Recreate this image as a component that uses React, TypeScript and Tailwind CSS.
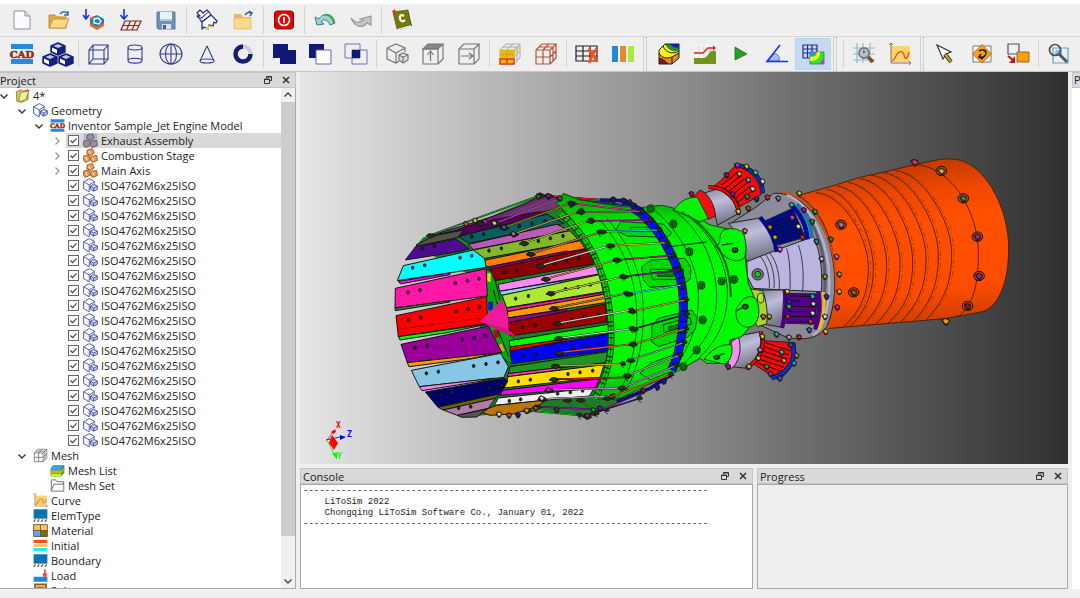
import { useState, type ReactNode } from "react";

type Shape = [points: string, fill: string];
type Dot = [x: number, y: number, fill: string];
type Wire = [x1: number, y1: number, x2: number, y2: number, stroke: string];

const Icon = ({ children, small }: { children: ReactNode; small?: boolean }) => (
  <svg
    viewBox="0 0 24 24"
    fill="none"
    className={small ? "size-[15px] shrink-0" : "size-6 shrink-0 overflow-visible"}
    aria-hidden="true"
  >
    {children}
  </svg>
);

/* ---------- icon drawings, all on a 24 x 24 grid ---------- */

const newFile = (
  <>
    <path d="M4 3h11l5 5v13H4z" fill="#fafcff" stroke="#8c949c" />
    <path d="M15 3v5h5" fill="#d5dbe2" stroke="#8c949c" />
  </>
);
const folderOpen = (
  <>
    <path d="M3 7h6l2 2h9v11H3z" fill="#e5a83c" stroke="#c08a35" />
    <path d="M3 20l4-9h16l-4 9z" fill="#fcd680" stroke="#c9953f" />
    <path d="M14 6c2-3 6-3 8 0M22 3v4h-4" stroke="#3f679c" strokeWidth="1.4" />
  </>
);
const importCad = (
  <>
    <path d="M4 1v9M1 7l3 4 3-4" stroke="#1230ff" strokeWidth="1.6" />
    <path d="M8 10l7-3 7 4v6l-7 4-7-4z" fill="#287eb2" />
    <path d="M8 15l7 4 7-4v3l-7 4-7-4z" fill="#f26522" />
    <path d="M12 11l4-1 3 3-2 3-5-1z" stroke="#fff" strokeWidth="1.3" />
    <path d="M8 11l4-2" stroke="#f26522" strokeWidth="2" />
  </>
);
const importMesh = (
  <>
    <path d="M6 1v9M2.500 7L6 11l3.500-4" stroke="#1230ff" strokeWidth="1.6" />
    <path
      d="M7 13h16l-4 9H3zM5 17.500h16M12.500 13l-4 9M18 13l-4 9"
      stroke="#7c2c20"
      strokeWidth="1.2"
      fill="#f5e9e2"
    />
  </>
);
const save = (
  <>
    <path d="M3 4h18v17H4l-1-1z" fill="#7190b5" stroke="#5e7898" />
    <path d="M6 4h12v9H6z" fill="#e9f2fb" />
    <path d="M6 11h12v2H6z" fill="#b4c8dc" />
    <path d="M8 16h9v5H8z" fill="#d8e0e8" />
    <path d="M9 17h3v4H9z" fill="#445e7c" />
  </>
);
/* wide brush head with its handle pointing up and left */
const brush = (
  <g stroke="#28308c" strokeWidth="1.3" strokeLinejoin="round">
    <path d="M2 8l3 3 9-7-2-2-4 3-3-3-3 3 3 3z" fill="#fff" />
    <path d="M5 12l2 2 9-7-2-3" fill="#fff" />
    <path d="M7 14l9-7 6 6-1 2-2-1-1 4-4-1-1 4-4-2-2 2z" fill="#fff" />
    <path d="M10 20l3 1 1-3 4 1" stroke="#e8d13a" />
  </g>
);
const folder = (
  <>
    <path d="M3 6h7l2 3h8v11H3z" fill="#e8b964" />
    <path d="M3 10h17v11H3z" fill="#fbd98c" stroke="#dcb062" strokeWidth=".7" />
    <path d="M14 7c2-3 5-3 6-2M18 3l3 2-2 3" stroke="#3d5c8d" strokeWidth="1.5" />
  </>
);
const power = (
  <>
    <rect x="2.500" y="3" width="19" height="18" rx="3" fill="#e60505" stroke="#801010" />
    <circle cx="12" cy="12" r="5.500" stroke="#fff" strokeWidth="1.6" />
    <path d="M12 9v6" stroke="#fff" strokeWidth="1.8" />
  </>
);
const undo = (
  <>
    <path
      d="M2 9l2 8 7-1-3-2c3-4 7-2 9 3l5-2c-2-8-11-12-16-4z"
      fill="#9fd2dc"
      stroke="#3b7f7d"
    />
    <path d="M9 8c5-2 10 2 11 7l2-1C21 7 13 3 9 8z" fill="#35b04c" />
  </>
);
const redo = (
  <path
    d="M22 8v9l-4-2c-5 6-12 4-16-5 3 4 8 6 12 2l-3-1z"
    fill="#c6c6c6"
    stroke="#999"
    strokeWidth="1.2"
  />
);
const manual = (
  <>
    <path d="M5 6l13-3 4 15-12 4z" fill="#2c5578" />
    <path d="M3 4l15-2 3 15-14 4z" fill="#757a08" stroke="#4c4f0a" strokeWidth=".7" />
    <path d="M2 3l3-2 1 4-2 1z" fill="#d43b22" />
    <path d="M7 21l14-4v2L9 22z" fill="#eee" />
    <path d="M14 8c-3-2-5 0-4 3s3 3 5 1" stroke="#fff" strokeWidth="2.2" />
  </>
);
const cad = (
  <>
    <path d="M1 2h22v5H1zM1 17h22v5H1z" fill="#238be0" />
    <text
      x="12"
      y="15.500"
      textAnchor="middle"
      fontSize="10"
      fontWeight="700"
      fontFamily="'DejaVu Serif', serif"
      fill="#962c12"
      stroke="#962c12"
      strokeWidth=".6"
    >
      CAD
    </text>
  </>
);
const cubes = (
  <g strokeLinejoin="round">
    {[
      [12, 0],
      [4, 11],
      [20, 11],
    ].map(([x, y]) => (
      <g key={x} transform={`translate(${x} ${y})`}>
        <path d="M0 1l7 3v6l-7 3-7-3V4z" fill="#17217c" stroke="#17217c" strokeWidth="1.400" />
        <path d="M0 2l4.500 2L0 6l-4.500-2z" fill="#c5c9e4" />
        <path d="M-6 5.500l5 2.200v3.800l-5-2.200z" fill="#fff" />
      </g>
    ))}
  </g>
);
const navyLine = { stroke: "#333a94", strokeWidth: 1.1 };
const box = (
  <g {...navyLine}>
    <path d="M2 8h15v14H2zM6 3h15v14H6zM2 8l4-5M17 8l4-5M17 22l4-5M2 22l4-5" />
  </g>
);
const cylinder = (
  <g {...navyLine}>
    <ellipse cx="12" cy="5.500" rx="7" ry="2.500" />
    <path d="M5 5.500v13c0 3.500 14 3.500 14 0v-13M5 18.500c0-3 14-3 14 0" />
  </g>
);
const sphere = (
  <g {...navyLine}>
    <ellipse cx="12" cy="12" rx="11" ry="10" />
    <ellipse cx="12" cy="12" rx="5.500" ry="10" />
    <path d="M12 2v20M1 12h22" />
  </g>
);
const cone = (
  <g {...navyLine}>
    <path d="M12 4L5 19M12 4l7 15" />
    <ellipse cx="12" cy="19" rx="7" ry="2" />
  </g>
);
const ring = (
  <>
    <circle cx="12" cy="12" r="7.500" stroke="#cbccd8" strokeWidth="4" />
    <path d="M12 4.500A7.500 7.500 0 1 0 19.500 12" stroke="#141e78" strokeWidth="4.500" />
  </>
);
const union = <path d="M1 2h15v6h8v14H8v-6H1z" fill="#101a75" />;
const subtract = (
  <>
    <path d="M1 2h15v14H1z" fill="#101a75" />
    <path d="M8 8h15v14H8z" fill="#fff" stroke="#626bb0" />
  </>
);
const intersect = (
  <>
    <path d="M1 2h15v14H1zM8 8h15v14H8z" stroke="#6c73b7" />
    <path d="M8 8h8v8H8z" fill="#101a75" />
  </>
);
const grayLine = { stroke: "#777", strokeWidth: 1.2 };
const cubePair = (
  <g {...grayLine}>
    <path d="M2 6l9-4 9 4v4M2 6v11l9 4 3-2M2 6l9 5 9-5M11 11v10" />
    <path d="M14 13l4-2 5 2v5l-5 3-4-3zM14 13l4 2 5-2M18 15v6" fill="#ddd" />
  </g>
);
const faceTop = (
  <g {...grayLine}>
    <path d="M2 7l5-5h15l-5 5z" fill="#888" />
    <path d="M2 7h15v15H2zM17 22l5-5V2M9.500 19v-9M6.500 13l3-4 3 4" />
  </g>
);
const faceSide = (
  <g {...grayLine}>
    <path d="M2 7h15v15H2zM2 7l5-5h15l-5 5M17 22l5-5V2M4 14h11M12 11l4 3-4 3" />
  </g>
);
const meshLines = "M2 8h14v14H2zM2 15h14M9 8v14M2 8l6-6h14l-6 6M16 22l6-6V2M16 15l6-6M9 8l6-6M5 5h14v14";
const meshFill = (
  <>
    <path d="M16 8l6-6v5l-6 6z" fill="#f4df65" />
    <path d={meshLines} stroke="#aaa" />
    <path d="M2 8h14v14H2z" fill="#e5bc13" />
    <path d="M2 12.500h14M9 8v9" stroke="#c9a51c" />
    <path d="M2 17h14v5H2zM9 17v5" stroke="#f33516" strokeWidth="1.5" />
  </>
);
const meshCube = <path d={meshLines} stroke="#b65334" strokeWidth="1.2" />;
const meshGray = <path d={meshLines} stroke="#666" strokeWidth="1.2" />;
const meshDelete = (
  <>
    <path d="M1 4h21v15H1zM1 9h21M1 14h21M8 4v15M15 4v15" stroke="#222" strokeWidth="1.2" />
    <path d="M13 7c4 3 6 8 9 13M22 6c-3 4-6 9-8 15" stroke="#ff4d12" strokeWidth="2.600" />
  </>
);
const bars = (
  <>
    <path d="M1 4h6v16H1z" fill="#2389dd" />
    <path d="M9 4h6v16H9z" fill="#e8862f" />
    <path d="M17 4h6v16h-6z" fill="#aee83a" />
  </>
);
const contour = (
  <>
    <path d="M2 8l6-6h14v14l-7 6H2z" fill="#faef18" />
    <path d="M8 2h14v6c-5 3-11 0-14-6z" fill="#21931e" />
    <path d="M13 2h9v3c-3 2-7 0-9-3z" fill="#1717ec" />
    <path d="M2 11c3 5 7 6 13 4l7-4v5l-7 6H2z" fill="#e58932" />
    <path d="M2 16c3 1 6 2 9 6H2z" fill="#8f0e0e" />
    <path
      d="M2 8l6-6h14v14l-7 6H2zM2 11c3 5 7 6 13 4l7-4M2 16c3 1 6 2 9 6M15 15v7M6 4c2 6 9 9 16 5"
      stroke="#222"
    />
  </>
);
const profile = (
  <>
    <path d="M1 2h22v20H1z" fill="#f7f7f7" />
    <path d="M1 6h22M1 10h22M6 2v15M11 2v15M17 2v15" stroke="#d9d9d9" strokeWidth=".8" />
    <path d="M1 16h9c5 0 5-6 9-7h4v13H1z" fill="#739418" />
    <path d="M1 11h9l5-5h6" stroke="#e22" strokeWidth="1.5" />
    <path d="M20 3l3 3-3 3z" fill="#e22" />
  </>
);
const play = <path d="M6 5l12 7-12 6z" fill="#22a022" stroke="#2b6b2b" strokeWidth=".8" />;
const angle = (
  <>
    <path d="M3 19l6-7c4-1 6 3 5 7z" fill="#a9bef5" stroke="#5570d8" />
    <path d="M15 3L2 19.500h21" stroke="#1632f5" strokeWidth="1.6" />
  </>
);
const gridContour = (
  <>
    <path d="M2 3h14v13H2zM2 7h14M2 11h14M6.500 3v13M11 3v13" stroke="#252e8c" strokeWidth="1.2" />
    <path d="M9 10h14v12H9z" fill="#30e72d" stroke="#555" strokeWidth=".7" />
    <path d="M9 19c8 0 10-4 10-9h-3c0 4-2 5-7 5z" fill="#f6ee22" />
    <path d="M9 10h6c0 3-2 4-6 4z" fill="#2c8fe0" />
    <path d="M23 17c-2 1-4 3-4 5h4z" fill="#b245c0" />
  </>
);
const gridProbe = (
  <>
    <path d="M5 1v20M11 1v20M18 1v20M1 6h22M1 12h22M1 18h22" stroke="#8db9cd" strokeWidth="1.2" />
    <circle cx="12" cy="11" r="5" fill="#9ccbe0" stroke="#777" strokeWidth="1.8" />
    <path d="M11 8l3 2-3 2z" fill="#f33" />
    <path d="M16 15l5 5" stroke="#814a31" strokeWidth="3.500" />
  </>
);
const curve = (
  <>
    <path d="M3 4h19v16H3z" fill="#fdd36c" />
    <path d="M3 1v20h20M1 3l2-2 2 2M21 19l2 2-2 2" stroke="#7d7466" />
    <path d="M4 19c3-1 3-5 6-8 3-2 5-2 6 2s3 6 5-3" stroke="#da5420" strokeWidth="1.3" />
  </>
);
const pointer = (
  <>
    <path d="M3 3l14 7-5 2-3 5z" fill="#fff" stroke="#333" strokeWidth="1.2" />
    <path d="M11 12l6 8" stroke="#333" strokeWidth="4" />
    <path d="M11 12l6 8" stroke="#b99a25" strokeWidth="2.500" />
  </>
);
const rotate = (
  <>
    <path d="M3 4h18v16H3z" fill="#fff" stroke="#777" />
    <path d="M12 2.500l9.500 9.500-9.500 9-9.500-9z" fill="#ffa010" stroke="#b4663a" />
    <path d="M9 9c3-2 7-1 7 2s-3 5-6 4M11 12l-2 3 4 2" stroke="#222" strokeWidth="1.6" />
  </>
);
const moveRect = (
  <>
    <path d="M2 2h11v10H2z" stroke="#555" strokeWidth="1.2" />
    <path d="M11 10h12v10H11z" fill="#ff9d05" stroke="#8e6a2e" />
    <path d="M2 14l5 4" stroke="#b51919" strokeWidth="2.200" />
    <path d="M9 14v7H3z" fill="#b51919" />
  </>
);
const zoomRect = (
  <>
    <path d="M6 6h15v15H6z" stroke="#55a4cf" strokeWidth="1.2" />
    <path d="M9 8h6v6H7z" fill="#7cb8f5" />
    <circle cx="8" cy="8" r="5.500" stroke="#4e4e4e" strokeWidth="1.7" />
    <path d="M12 12l8 8" stroke="#555" strokeWidth="3" />
  </>
);

/* tree-only icons */
const project = (
  <>
    <path d="M2 6l8-3 4 2 7-2v15l-10 5-8-2z" fill="#d8c94e" stroke="#807933" strokeWidth="1.3" />
    <path d="M9 7l13-2-5 14-11 3z" fill="#f4edaa" stroke="#8c8440" strokeWidth="1.3" />
    <path d="M16 4h7" stroke="#ee4822" strokeWidth="2" />
  </>
);
const part = (
  <g stroke="#4a52a6" strokeWidth="1.5">
    <path d="M1 6l9-5 8 4v4M1 6v11l9 5V11L1 6M10 11l8-5" />
    <path d="M12 13l5-3 6 3v5l-6 3-5-3zM12 13l5 3 6-3M17 16v5" fill="#c3c7e6" />
  </g>
);
const assembly = (
  <g fill="#f2984c" stroke="#96501f" strokeWidth="1.4">
    <path d="M7 3l8-2 3 7-7 4-5-3z" />
    <path d="M1 13l8-2 3 8-8 4-3-3z" />
    <path d="M13 13l9-1 1 8-8 3-3-4z" />
    <path d="M9 5l3 4M4 15l3 5M15 15l3 5" stroke="#ffe0b8" strokeWidth="2" />
  </g>
);
const assemblyDim = (
  <>
    <path d="M1 1h22v22H1z" fill="#a6b8e4" />
    <g fill="#a58d8d" stroke="#666078" strokeWidth="1.6">
      <path d="M7 3l8-2 3 7-7 4-5-3z" />
      <path d="M1 13l8-2 3 8-8 4-3-3z" />
      <path d="M13 13l9-1 1 8-8 3-3-4z" />
    </g>
  </>
);
const meshList = (
  <>
    <path d="M1 9l5-6h17v12l-5 6H1z" fill="#3f9a45" />
    <path d="M1 8l5-5h17l-5 5zM1 8h17v4H1z" fill="#27a7ec" />
    <path d="M1 12h17l5-4v3l-5 5H1z" fill="#d8ab1c" />
    <path d="M1 17h17v5H1z" fill="#bcef35" />
  </>
);
const meshSet = (
  <path d="M2 21V3h7l2 3h11v15zM2 21l4-11h16M22 6l-2 4" stroke="#777" strokeWidth="1.6" />
);
const support = (
  <>
    <path d="M1 2h22v15H1z" fill="#0875ad" />
    <path d="M4 18l-3 4M10 18l-3 4M16 18l-3 4M22 18l-3 4" stroke="#8b4b2c" strokeWidth="2" />
  </>
);
const material = (
  <>
    <path d="M1 3h11v9H1zM13 3h10v9H13z" fill="#fbc651" />
    <path d="M1 12h11v10H1z" fill="#66a3f4" />
    <path d="M12 12h11v10H12z" fill="#767209" />
    <path d="M1 2.500h22v19H1zM12 3v19M1 12h22" stroke="#5b4c2a" strokeWidth="1.3" />
  </>
);
const initial = (
  <>
    <path d="M1 3h22v5H1z" fill="#ff4e0c" />
    <path d="M1 10h22v4H1z" fill="#fdb64a" />
    <path d="M1 16h22v5H1z" fill="#12f5f7" />
  </>
);
const load = (
  <>
    <path d="M1 14h22v8H1z" fill="#1e86dc" />
    <path d="M19 2v11M16 9l3 5 3-5" stroke="#e94020" strokeWidth="2.400" />
  </>
);
const solver = (
  <>
    <path d="M3 2h18v20H3z" fill="#e5b262" stroke="#8c5a20" strokeWidth="2.500" />
    <path d="M7 7h10v4H7z" fill="#fff" stroke="#8c5a20" strokeWidth="1.500" />
  </>
);

/* ---------- toolbars ---------- */

type Tool = { name: string; icon: ReactNode; active?: boolean } | "sep" | "grip";

const fileTools: Tool[] = [
  { name: "New", icon: newFile },
  { name: "Open", icon: folderOpen },
  { name: "Import geometry", icon: importCad },
  { name: "Import mesh", icon: importMesh },
  { name: "Save", icon: save },
  "sep",
  { name: "Clear", icon: brush },
  { name: "Work directory", icon: folder },
  "sep",
  { name: "Stop", icon: power },
  "sep",
  { name: "Undo", icon: undo },
  { name: "Redo", icon: redo },
  "sep",
  { name: "Manual", icon: manual },
];

const modelTools: Tool[] = [
  { name: "CAD", icon: cad },
  { name: "Assembly", icon: cubes },
  "sep",
  { name: "Box", icon: box },
  { name: "Cylinder", icon: cylinder },
  { name: "Sphere", icon: sphere },
  { name: "Cone", icon: cone },
  { name: "Torus", icon: ring },
  "sep",
  { name: "Union", icon: union },
  { name: "Subtract", icon: subtract },
  { name: "Intersect", icon: intersect },
  "sep",
  { name: "Parts", icon: cubePair },
  { name: "Extrude face", icon: faceTop },
  { name: "Offset face", icon: faceSide },
  "sep",
  { name: "Surface mesh", icon: meshFill },
  { name: "Volume mesh", icon: meshCube },
  "sep",
  { name: "Delete mesh", icon: meshDelete },
  { name: "Mesh quality", icon: bars },
  "grip",
  { name: "Contour", icon: contour },
  { name: "Deformation", icon: profile },
  { name: "Play", icon: play },
  { name: "Angle", icon: angle },
  { name: "Mesh and contour", icon: gridContour, active: true },
  "grip",
  "sep",
  { name: "Probe", icon: gridProbe },
  { name: "Curve", icon: curve },
  "grip",
  { name: "Select", icon: pointer },
  { name: "Rotate", icon: rotate },
  { name: "Pan", icon: moveRect },
  "sep",
  { name: "Zoom", icon: zoomRect },
];

const Toolbar = ({ label, tools }: { label: string; tools: Tool[] }) => (
  <div role="toolbar" aria-label={label} className="flex h-full items-center pl-1">
    {tools.map((tool, i) => {
      if (tool === "sep") {
        return <span key={i} className="mx-0.5 h-7 w-px shrink-0 bg-[#d4d4d4]" />;
      }
      if (tool === "grip") {
        return (
          <span
            key={i}
            className="ml-0.5 mr-1 h-full w-1 shrink-0 border-l border-r border-l-[#cfcfcf] border-r-[#b0b0b0] [border-right-style:dotted]"
          />
        );
      }
      return (
        <button
          key={i}
          type="button"
          aria-label={tool.name}
          className={
            tool.active
              ? "flex h-8 w-9 shrink-0 items-center justify-center border border-[#b5d9f2] bg-[#c3daf1]"
              : "flex h-8 w-9 shrink-0 items-center justify-center"
          }
        >
          <Icon>{tool.icon}</Icon>
        </button>
      );
    })}
  </div>
);

/* ---------- project tree ---------- */

type Row = {
  text: string;
  level: 0 | 1 | 2 | 3;
  icon: ReactNode;
  arrow?: "open" | "closed";
  check?: boolean;
  selected?: boolean;
};

const bolts: Row[] = Array.from({ length: 18 }, () => ({
  text: "ISO4762M6x25ISO",
  level: 3,
  icon: part,
  check: true,
}));

const rows: Row[] = [
  { text: "4*", level: 0, icon: project, arrow: "open" },
  { text: "Geometry", level: 1, icon: part, arrow: "open" },
  { text: "Inventor Sample_Jet Engine Model", level: 2, icon: cad, arrow: "open" },
  { text: "Exhaust Assembly", level: 3, icon: assemblyDim, arrow: "closed", check: true, selected: true },
  { text: "Combustion Stage", level: 3, icon: assembly, arrow: "closed", check: true },
  { text: "Main Axis", level: 3, icon: assembly, arrow: "closed", check: true },
  ...bolts,
  { text: "Mesh", level: 1, icon: meshGray, arrow: "open" },
  { text: "Mesh List", level: 2, icon: meshList },
  { text: "Mesh Set", level: 2, icon: meshSet },
  { text: "Curve", level: 1, icon: curve },
  { text: "ElemType", level: 1, icon: support },
  { text: "Material", level: 1, icon: material },
  { text: "Initial", level: 1, icon: initial },
  { text: "Boundary", level: 1, icon: support },
  { text: "Load", level: 1, icon: load },
  { text: "Solver", level: 1, icon: solver },
];

const indent = ["pl-0", "pl-[18px]", "pl-[35px]", "pl-[53px]"];

const Chevron = ({ d, className }: { d: string; className: string }) => (
  <svg viewBox="0 0 8 8" fill="none" stroke="currentColor" strokeWidth="1.4" className={className}>
    <path d={d} />
  </svg>
);

const TreeRow = ({ row, id }: { row: Row; id: string }) => {
  const [checked, setChecked] = useState(true);

  return (
    <li className={`flex h-[15px] items-center ${indent[row.level]}`}>
      {row.arrow ? (
        <button type="button" aria-label={`Toggle ${row.text}`} className="size-2 shrink-0">
          {row.arrow === "open" ? (
            <Chevron d="M.5 2.500L4 6l3.500-3.500" className="size-2 text-[#333]" />
          ) : (
            <Chevron d="M2.500 .5L6 4 2.500 7.500" className="size-2 text-[#999]" />
          )}
        </button>
      ) : (
        <span className="w-2 shrink-0" />
      )}
      <div
        className={
          row.selected
            ? "ml-[5px] flex h-full min-w-0 flex-1 items-center bg-[#d9d9d9] pl-0.5"
            : "ml-[5px] flex h-full min-w-0 flex-1 items-center pl-0.5"
        }
      >
        {row.check && (
          <span className="relative mr-1 size-[11px] shrink-0">
            <input
              id={id}
              type="checkbox"
              checked={checked}
              onChange={() => setChecked(!checked)}
              className="block size-[11px] appearance-none border border-[#666] bg-white"
            />
            {checked && (
              <Chevron
                d="M.5 4l2.500 2.500L7.500 1.500"
                className="pointer-events-none absolute inset-0 m-auto size-[7px] text-[#444]"
              />
            )}
          </span>
        )}
        <Icon small>{row.icon}</Icon>
        {row.check ? (
          <label htmlFor={id} className="ml-[3px] whitespace-nowrap">
            {row.text}
          </label>
        ) : (
          <span className="ml-[3px] whitespace-nowrap">{row.text}</span>
        )}
      </div>
    </li>
  );
};

const PanelTitle = ({ title, flush }: { title: string; flush?: boolean }) => (
  <header
    className={`flex h-4 shrink-0 items-center border border-[#c4c4c4] bg-[#d9d9d9] pr-[3px] ${flush ? "border-l-0 pl-0" : "pl-0.5"}`}
  >
    <h2 className="flex-1 whitespace-nowrap leading-[13px]">{title}</h2>
    <button type="button" aria-label={`Float ${title}`} className="mr-1.5 flex w-3 justify-center">
      <svg viewBox="0 0 8 8" fill="none" stroke="#333" className="size-2">
        <path d="M2.500 2V.5h5v4H6M.5 3h5v4.500h-5zM.5 3.500h5M2.500 1h5" />
      </svg>
    </button>
    <button type="button" aria-label={`Close ${title}`} className="flex w-3 justify-center">
      <svg viewBox="0 0 8 8" fill="none" stroke="#333" strokeWidth="1.5" className="size-2">
        <path d="M1 1l6 6M7 1L1 7" />
      </svg>
    </button>
  </header>
);

const ProjectPanel = () => (
  <section className="flex w-[296px] shrink-0 flex-col">
    <PanelTitle title="Project" flush />
    <div className="flex min-h-0 flex-1 overflow-hidden border-b border-r border-[#aaa] bg-white">
      <ul className="min-w-0 flex-1 overflow-hidden">
        {rows.map((row, i) => (
          <TreeRow key={i} row={row} id={`node-${i}`} />
        ))}
      </ul>
      <div className="flex w-[14px] shrink-0 flex-col bg-[#f0f0f0]">
        <button type="button" aria-label="Scroll up" className="flex h-[14px] items-center justify-center">
          <Chevron d="M.5 5.500L4 2l3.500 3.500" className="size-2 text-[#444]" />
        </button>
        <div className="flex-[434] bg-[#cdcdcd]" />
        <div className="flex-[38]" />
        <button type="button" aria-label="Scroll down" className="flex h-[14px] items-center justify-center">
          <Chevron d="M.5 2.500L4 6l3.500-3.500" className="size-2 text-[#444]" />
        </button>
      </div>
    </div>
  </section>
);

/* ---------- jet engine ---------- */

const flaps: Shape[] = [
  // far side, top
  ["150,166 240,140 330,112 430,75 480,48 540,52 560,78 480,98 240,150", "#6d3a70"],
  ["190,165 300,125 480,95 505,105 235,170", "#520056"],
  ["235,170 500,103 552,130 268,190", "#07605c"],
  ["265,193 530,133 570,152 280,209", "#bb5bb8"],
  ["275,211 570,152 598,183 310,236", "#86b82e"],
  ["312,241 600,182 615,206 320,262", "#ff8004"],
  ["318,262 560,213 575,218 330,270", "#7d0382"],
  ["330,268 625,206 642,252 345,302", "#8b0000"],
  ["355,313 650,255 657,282 358,334", "#fb87fb"],
  ["358,334 540,304 540,312 365,346", "#8bd0ee"],
  ["366,346 657,284 670,335 380,383", "#aee835"],
  ["380,384 680,336 680,342 382,394", "#ff1b9d"],
  ["382,395 682,341 686,366 384,414", "#ff9c00"],
  ["384,414 560,388 560,394 384,428", "#91068e"],
  ["384,428 676,372 682,426 390,468", "#9c0000"],
  ["388,482 690,432 690,460 390,501", "#00ff00"],
  ["390,501 560,476 560,482 390,513", "#f40000"],
  ["390,514 686,462 686,512 395,551", "#0000ff"],
  ["390,560 690,514 676,548 385,581", "#229422"],
  ["385,581 540,562 540,570 382,590", "#ff3bc4"],
  ["384,590 672,554 660,592 373,624", "#ffdd00"],
  ["368,631 658,596 648,622 360,646", "#ff00ff"],
  ["355,654 642,624 628,648 343,676", "#eeeeee"],
  ["300,695 350,676 500,660 470,680 400,702 330,706", "#ba7608"],
  // near side, outer ring
  ["108,195 160,168 250,150 235,172 115,198", "#555048"],
  ["76,240 106,201 228,177 268,206 240,214", "#4d0b90"],
  ["52,302 70,257 280,210 314,236 318,262", "#00ffff"],
  ["55,304 210,279 210,284 62,312", "#ff00ff"],
  ["45,384 46,325 318,266 322,348", "#ff18a5"],
  ["45,384 210,362 210,366 46,392", "#228b22"],
  ["48,407 320,350 322,430 55,470", "#ff0000"],
  ["55,470 325,432 200,458 60,480", "#00ff00"],
  ["63,493 325,438 366,518 82,548", "#980099"],
  ["82,548 360,518 270,536 87,560", "#ff9a0a"],
  ["94,571 362,520 385,560 372,592 118,620", "#87c7e6"],
  ["118,620 340,595 300,604 126,632", "#e888e8"],
  ["136,636 372,595 384,602 362,641 174,682", "#000068"],
  ["174,682 362,641 345,655 190,690", "#6b6404"],
  ["190,690 346,655 325,685 232,706", "#ad7da8"],
  ["232,706 322,687 290,711 244,712", "#555"],
];

const holes = [
  127, 206, 163, 198, 98, 263, 134, 256, 240, 233, 275, 227, 84, 337, 120, 330, 226, 309, 262, 302,
  297, 296, 86, 420, 122, 413, 228, 393, 264, 387, 299, 381, 105, 503, 141, 497, 247, 479, 283, 474,
  319, 467, 139, 580, 175, 575, 281, 558, 318, 552, 354, 547, 181, 643, 217, 637, 327, 622, 364, 617,
  236, 684, 272, 680, 275, 170, 311, 163, 418, 138, 456, 131, 495, 123, 327, 212, 364, 205, 475, 183,
  511, 175, 549, 168, 374, 277, 410, 270, 523, 250, 559, 242, 597, 235, 407, 356, 445, 348, 557, 327,
  594, 321, 631, 314, 428, 442, 465, 436, 577, 418, 614, 411, 653, 405, 430, 528, 466, 522, 579, 503,
  617, 497, 654, 491, 415, 604, 451, 599, 564, 582, 600, 577, 638, 572, 388, 663, 422, 658, 533, 641,
  571, 637, 608, 632,
];

const flapWires: Wire[] = [
  [150, 166, 480, 46, "#0aa52a"],
  [300, 130, 505, 48, "#c013c0"],
  [345, 130, 540, 55, "#d63ad6"],
  [480, 46, 750, 66, "#18b52e"],
  [505, 48, 735, 64, "#f01818"],
  [540, 55, 765, 78, "#202090"],
  [575, 70, 780, 94, "#ff1b9d"],
  [370, 143, 573, 70, "#9a8a08"],
  [400, 162, 605, 92, "#caa23a"],
  [430, 190, 635, 120, "#a8d830"],
  [450, 222, 660, 157, "#b08060"],
  [480, 257, 690, 197, "#e8e8e8"],
  [495, 297, 710, 240, "#c79a20"],
  [510, 340, 730, 290, "#b9e02c"],
  [520, 385, 740, 340, "#a88a70"],
  [530, 430, 755, 390, "#dddddd"],
  [535, 475, 757, 446, "#dddddd"],
  [535, 518, 760, 492, "#ff5020"],
  [525, 558, 730, 552, "#c8b820"],
  [520, 598, 742, 592, "#e01616"],
  [505, 630, 725, 625, "#e08ae0"],
  [485, 657, 700, 648, "#b0b0b0"],
  [440, 692, 620, 708, "#08c020"],
  [470, 680, 680, 690, "#9a08a0"],
  [620, 710, 780, 640, "#f01818"],
  [640, 700, 780, 655, "#14149a"],
  [560, 660, 600, 706, "#28a0a0"],
  [600, 660, 650, 700, "#10c020"],
];

const bandWires: Wire[] = [
  [-60, 186, 128, 184, "#ff1b9d"],
  [-30, 213, 155, 210, "#9a089a"],
  [5, 245, 180, 240, "#10d8e8"],
  [30, 287, 203, 278, "#e8c010"],
  [50, 330, 220, 316, "#b0108a"],
  [70, 380, 237, 360, "#7d0c92"],
  [85, 432, 250, 404, "#48c8d8"],
  [95, 484, 260, 449, "#c0b010"],
  [100, 537, 262, 492, "#14148a"],
  [97, 583, 260, 536, "#a8a810"],
  [90, 631, 254, 577, "#999"],
  [80, 676, 242, 615, "#aaa"],
  [65, 714, 230, 646, "#d080e0"],
  [20, 745, 214, 674, "#f06010"],
];

const casingBolts: Dot[] = [
  [484, 93, "#d8b020"],
  [550, 175, "#22904a"],
  [592, 290, "#9c2aa0"],
  [597, 408, "#8a2aa8"],
  [563, 498, "#901414"],
  [183, 254, "#a070a0"],
  [221, 457, "#b05018"],
];

const edgeBolts: Dot[] = [
  [404, 66, "#e03040"],
  [497, 543, "#e0a010"],
];

const flangeBolts: Dot[] = [
  [275, 132, "#b01070"], [380, 75, "#9a089a"], [412, 46, "#c030d0"], [440, 50, "#d0c020"],
  [467, 68, "#30c8d8"], [488, 95, "#eee"], [445, 90, "#40b0c0"], [418, 72, "#d8b820"],
  [458, 117, "#f0f0f0"], [442, 140, "#209050"], [398, 132, "#7020a0"], [415, 185, "#e0d020"],
  [470, 147, "#104090"], [503, 142, "#e03020"], [535, 145, "#888"], [445, 175, "#a06010"],
  [598, 130, "#b8d830"], [435, 243, "#d89020"], [575, 165, "#30c0d0"], [612, 180, "#b010b0"],
  [645, 185, "#20b020"], [577, 203, "#d040c0"], [637, 215, "#10a010"], [595, 230, "#e0e0e0"],
  [607, 262, "#e02020"], [510, 232, "#f08020"], [525, 262, "#c8b820"], [540, 298, "#ff60d0"],
  [650, 275, "#408890"], [665, 327, "#e8a8d0"], [675, 380, "#c09010"], [693, 268, "#308850"],
  [710, 320, "#e060e0"], [718, 373, "#a8a820"], [718, 425, "#e0c020"], [712, 472, "#c020c0"],
  [562, 425, "#f0d020"], [567, 455, "#2030e0"], [567, 470, "#20d020"], [563, 500, "#e02020"],
  [638, 440, "#20c0d0"], [640, 462, "#ddd"], [638, 490, "#eee"], [632, 515, "#e03020"],
  [628, 540, "#3070c0"], [680, 440, "#2030c0"], [675, 500, "#ddd"], [677, 545, "#e8c020"],
  [530, 553, "#20b0b0"], [567, 562, "#aaa"], [597, 561, "#c03010"], [490, 500, "#e06020"],
  [508, 500, "#b0b020"], [487, 560, "#d8d020"], [480, 600, "#e060c0"], [475, 625, "#e0d020"],
  [545, 607, "#40b0b0"], [552, 632, "#e8a020"], [500, 650, "#30a030"], [512, 672, "#b020b0"],
  [540, 685, "#3060e0"], [590, 617, "#909020"], [582, 640, "#20a8c0"], [385, 650, "#a010a0"],
  [447, 650, "#d8d020"], [572, 585, "#2050d0"], [70, 152, "#1818b0"], [97, 165, "#1818b0"],
  [40, 148, "#1818b0"], [172, 712, "#1818b0"], [192, 694, "#1818b0"], [130, 722, "#802020"],
];

const greenBolts = [
  220, 222, 268, 305, 304, 406, 308, 510, 290, 600, 365, 393, 402, 388, 152, 176, 250, 650,
];

const rimBolts: Dot[] = [
  [258, 132, "#e05010"], [285, 122, "#e0c020"], [315, 125, "#b020b0"], [343, 130, "#e0e080"],
  [372, 142, "#207090"], [400, 162, "#b07090"], [475, 50, "#108030"], [505, 48, "#901090"],
  [540, 55, "#108030"], [573, 72, "#1818a0"], [700, 60, "#1818b0"], [732, 63, "#1818b0"],
  [760, 76, "#1818b0"], [357, 703, "#ddd"], [387, 706, "#e04010"], [414, 705, "#1818c0"],
  [440, 692, "#e0a010"], [467, 685, "#806020"], [622, 707, "#902090"], [530, 690, "#404040"],
  [485, 655, "#f4f4f4"], [505, 630, "#e010e0"], [640, 690, "#10a020"], [660, 685, "#7020a0"],
];

const casingRings = [
  "M108 158C190 165 265 290 265 385S225 530 190 560",
  "M140 148C215 160 280 290 280 385S240 530 212 557",
  "M172 138C250 150 320 280 320 375S285 520 250 554",
  "M205 127C285 140 360 270 360 370S325 515 288 551",
  "M240 116C320 125 398 260 398 365S365 510 325 549",
  "M275 106C355 115 438 255 438 355S405 500 362 546",
  "M310 98C390 105 475 245 475 345S445 495 402 543",
  "M345 92C425 95 515 240 515 340S485 490 440 538",
];

const Bolt = ({ dot: [x, y, fill], r = 7 }: { dot: Dot; r?: number }) => (
  <g stroke="#111" strokeWidth="2">
    <path d={`M${x - r - 2} ${y - 3}l${r} -5 ${r + 2} 4 -2 ${r + 4} -${r} 3z`} fill="#333" />
    <path d={`M${x - r} ${y - 4}l${r} -3 ${r} 5 -2 ${r - 1} -${r} 2z`} fill={fill} />
  </g>
);

const Fins = ({ x1, y1, x2, y2, dx, dy, n }: Record<"x1" | "y1" | "x2" | "y2" | "dx" | "dy" | "n", number>) => (
  <g stroke="#111" strokeWidth="3">
    {Array.from({ length: n }, (_, i) => {
      const t = (i + 0.5) / n;
      const x = x1 + (x2 - x1) * t;
      const y = y1 + (y2 - y1) * t;
      return <path key={i} d={`M${x} ${y}l${dx} ${dy}`} />;
    })}
  </g>
);

const WireSet = ({ wires }: { wires: Wire[] }) => (
  <>
    {wires.map(([x1, y1, x2, y2, stroke], i) => (
      <g key={i}>
        <path d={`M${x1} ${y1}L${x2} ${y2}`} stroke="#222" strokeWidth="5" />
        <path d={`M${x1} ${y1}L${x2} ${y2}`} stroke={stroke} strokeWidth="3" />
        <path
          d={`M${x1 - 12} ${y1 + 2}l8-7 14 1 6 6-12 6zM${x2 - 10} ${y2 - 4}l12-4 6 10-12 4zM${x2 - 4} ${y2 + 8}l8 4`}
          fill="#223018"
          stroke="#111"
          strokeWidth="2"
        />
      </g>
    ))}
  </>
);

const Casing = () => (
  <g transform="translate(540 -30)">
    <path
      d="M55 166L150 140 240 112 330 92 404 74 470 60C500 55 530 55 555 66 625 95 686 210 686 325 686 430 655 500 608 515L500 535 400 544 290 553 140 566C178 480 190 250 55 166z"
      fill="url(#casing)"
      stroke="#4a2008"
      strokeWidth="3"
    />
    <g fill="none" stroke="#3a1a06" strokeWidth="2.500">
      {casingRings.map((d) => (
        <path key={d} d={d} />
      ))}
      <path d="M412 74C520 85 595 220 595 340S570 500 535 530" />
    </g>
    <g fill="none" stroke="#a83a08" strokeWidth="3" strokeDasharray="14 6 5 9" transform="translate(7 0)">
      {casingRings.map((d) => (
        <path key={d} d={d} />
      ))}
    </g>
    {casingBolts.map((dot, i) => (
      <g key={i}>
        <ellipse cx={dot[0]} cy={dot[1]} rx="16" ry="14" fill="#b5420c" stroke="#111" strokeWidth="3" />
        <Bolt dot={dot} r={9} />
      </g>
    ))}
    {edgeBolts.map((dot, i) => (
      <Bolt key={i} dot={dot} r={10} />
    ))}
  </g>
);

const Combustion = () => (
  <g stroke="#222" strokeWidth="3">
    <path
      d="M400 215L470 170 520 130C590 125 650 185 680 260 710 340 715 450 680 530 660 560 620 575 560 562L480 525 430 400z"
      fill="#8b8b9c"
    />
    <path d="M545 126C640 140 708 270 708 400 708 480 690 540 662 560" fill="none" stroke="#d84a08" strokeWidth="6" />
    <path d="M560 135C640 165 690 290 688 400 688 470 672 530 640 556" fill="none" stroke="#b4b4cc" strokeWidth="7" />
    <path d="M595 165C650 215 678 320 675 400S660 500 645 540" fill="none" stroke="#5c5c68" strokeWidth="9" />
    <path d="M440 325L530 300 640 260C665 310 668 380 664 425L550 420 460 415 442 380z" fill="#b9b5e0" />
    <path
      d="M480 318C500 340 510 380 508 415M495 312C518 340 525 380 522 415M508 308C532 335 540 380 538 418M560 295C568 320 572 370 570 418M595 285C608 320 612 370 608 424"
      fill="none"
      strokeWidth="2.500"
    />
    <circle cx="473" cy="373" r="17" fill="#777" />
    <circle cx="473" cy="373" r="9" fill="#20c020" />

    {/* upper can */}
    <path d="M304 132L360 114C395 130 418 160 416 190L352 226C345 185 335 150 304 132z" fill="url(#tube)" />
    <path d="M340 110L362 92 405 48C450 55 485 100 482 135L420 170C410 140 385 110 340 110z" fill="#f40808" />
    <Fins x1={360} y1={100} x2={415} y2={165} dx={50} dy={-40} n={6} />
    <path d="M325 112C375 108 415 150 416 194" fill="none" stroke="#111" strokeWidth="12" />
    <path d="M325 112C375 108 415 150 416 194" fill="none" stroke="#f00" strokeWidth="7" />
    <path d="M404 46C450 45 492 90 488 130" fill="none" stroke="#111" strokeWidth="12" />
    <path d="M404 46C450 45 492 90 488 130" fill="none" stroke="#0b2fe0" strokeWidth="7" />
    <path d="M282 138L300 120C325 130 345 165 346 198L325 208z" fill="#f01010" />

    {/* blue can */}
    <path d="M385 220L485 203C515 235 525 270 525 302L440 335 420 260z" fill="url(#tube)" />
    <path d="M490 215L578 175 615 262 535 285z" fill="#000b8c" />
    <Fins x1={500} y1={218} x2={530} y2={282} dx={85} dy={-28} n={6} />
    <path d="M480 202C510 235 526 270 530 306" fill="none" stroke="#000b8c" strokeWidth="13" />
    <path d="M573 164C605 195 620 230 622 268" fill="none" stroke="#000b9c" strokeWidth="14" />
    <path d="M590 162C622 195 634 230 636 262" fill="none" stroke="#1878a8" strokeWidth="11" />

    {/* purple can */}
    <path d="M475 420L552 420 546 532 488 522z" fill="url(#tube)" />
    <path d="M560 430L652 432 646 522 555 520z" fill="#54008c" />
    <Fins x1={566} y1={430} x2={562} y2={522} dx={78} dy={2} n={6} />
    <path d="M554 418C560 455 556 500 546 534" fill="none" stroke="#4a0082" strokeWidth="13" />
    <path d="M655 425C661 460 656 505 646 538" fill="none" stroke="#4a0082" strokeWidth="13" />
    <path d="M670 426C674 465 670 505 658 540" fill="none" stroke="#ffb80a" strokeWidth="9" />
    <path d="M445 416L488 422C500 455 504 490 500 522L472 530 440 470z" fill="#a9d62c" />
    <ellipse cx="482" cy="444" rx="10" ry="15" fill="#b8e040" />

    {/* lower can */}
    <path d="M405 560L480 545C490 590 470 630 440 655L395 650z" fill="url(#tube)" />
    <path d="M490 572L585 578C590 620 570 670 535 690L465 645z" fill="#f40808" />
    <Fins x1={500} y1={572} x2={468} y2={645} dx={75} dy={25} n={6} />
    <path d="M482 545C500 590 478 630 438 656" fill="none" stroke="#111" strokeWidth="12" />
    <path d="M482 545C500 590 478 630 438 656" fill="none" stroke="#f00" strokeWidth="7" />
    <path d="M578 582C592 630 562 672 515 684" fill="none" stroke="#111" strokeWidth="14" />
    <path d="M578 582C592 630 562 672 515 684" fill="none" stroke="#0b2fe0" strokeWidth="9" />
    <path d="M395 575L415 560C428 600 415 640 395 655L375 645z" fill="#f590f0" />
  </g>
);

const GreenBody = () => (
  <g stroke="#0b4a0b" strokeWidth="3">
    <path
      d="M-110 130L-60 150 60 170 130 172 185 166C230 175 280 190 330 225L400 240C440 255 440 290 436 330L445 400 475 470C478 500 470 525 450 530L425 560 390 570 385 640 320 640 300 625 235 662 60 745-10 748C20 690 40 630 38 560 36 440 0 280-130 160z"
      fill="url(#green)"
    />
    <path d="M222 180C240 150 270 140 292 142L325 205 300 215z" fill="#0af00a" />
    <path
      d="M345 285C370 290 350 250 372 240 400 230 425 240 432 255 440 280 440 310 432 325 410 340 380 335 345 285zM408 480C425 440 455 430 470 450 482 480 478 515 458 528 430 540 405 520 408 480zM312 628C340 590 375 580 395 585 400 610 390 640 370 642z"
      fill="#08f408"
    />
    <g fill="none" stroke="#075a07">
      <path d="M150 170C230 230 290 330 295 430S260 610 215 660" />
      <path d="M215 178C300 230 350 340 350 440S300 590 240 655" />
      <path d="M245 185C335 245 385 340 382 440S330 590 290 632" />
      <path d="M262 195C350 250 395 350 392 440" strokeWidth="6" />
      <path d="M0 210C70 290 105 380 110 480S90 660 55 740" />
      <path d="M20 205C95 290 128 380 130 480S110 660 80 722" />
      <path d="M400 280l-35 5M432 470l-20 12M375 610l-30 10M210 290l110-14" strokeWidth="4" />
    </g>
    <g fill="#00d800" stroke="#064006">
      <path d="M48 240L62 215 190 222 215 250 200 262 80 258z" />
      <path d="M125 350L155 330 255 325 272 350 272 385 250 405 150 412 130 390z" />
      <path d="M155 530L175 505 275 480 292 505 285 540 262 562 175 590 155 575z" />
      <path d="M120 670L150 640 220 615 240 640 225 660 150 690z" />
      <path d="M150 358h100v30H158zM190 524l80-22 4 20-82 26zM90 232h90v12H96z" fill="none" />
      <path d="M172 365h50v14h-50zM205 530l50-12v12l-48 12z" fill="#0a800a" />
    </g>
    <g stroke="#000">
      <ellipse cx="405" cy="300" rx="9" ry="7" fill="#063" />
      <ellipse cx="436" cy="470" rx="9" ry="7" fill="#063" />
      <ellipse cx="350" cy="622" rx="9" ry="6" fill="#063" />
    </g>
    {greenBolts.map((x, i) =>
      i % 2 === 0 ? (
        <g key={i} fill="#0a8c0a" stroke="#063006">
          <ellipse cx={x} cy={greenBolts[i + 1]} rx="11" ry="12" />
          <ellipse cx={x} cy={greenBolts[i + 1]} rx="5" ry="6" />
        </g>
      ) : null
    )}
    {/* actuator ring */}
    <path
      d="M95 172C160 200 248 340 250 450 252 540 240 610 215 660"
      fill="none"
      stroke="#111"
      strokeWidth="27"
    />
    <path
      d="M95 172C160 200 248 340 250 450 252 540 240 610 215 660"
      fill="none"
      stroke="#0a12e8"
      strokeWidth="22"
      strokeDasharray="30 3"
    />
    <path d="M0 150L60 152 130 180M214 674L150 715 50 755" fill="none" stroke="#10107c" strokeWidth="11" />
  </g>
);

const Nozzle = () => (
  <g transform="translate(-660 90)">
    <path
      d="M105 200L130 172 250 140 330 110 480 46 700 66 780 90 660 130 690 370 690 560 650 640 780 640 620 712 470 690 250 712 300 640 300 300z"
      fill="#1f7a2a"
    />
    <path d="M300 262L400 300 400 560 330 500z" fill="#06a806" stroke="#042" strokeWidth="3" />
    <path d="M322 280h10v25h-10z" fill="#ffd000" />
    <path d="M325 365h14v26h-14z" fill="#1515d8" />
    <path d="M338 452l14-4 8 22-14 4z" fill="#a01414" />
    <path d="M352 495l14-4 8 22-14 4z" fill="#e8a010" />
    <path d="M346 300l14 60M340 330l26 90M350 440l36 90" stroke="#111" strokeWidth="3" fill="none" />
    <g stroke="#151515" strokeWidth="3" strokeLinejoin="round">
      {flaps.map(([points, fill]) => (
        <polygon key={points} points={points} fill={fill} />
      ))}
    </g>
    <path d="M60 447L325 412" stroke="#600" strokeWidth="2" strokeDasharray="20 8" />
    <path d="M300 424L366 360C384 390 388 430 384 464z" fill="#f0189c" />
    <path d="M300 424L384 464 410 470 384 448z" fill="#d01488" />
    <g fill="#2a2a2a" stroke="#000" strokeWidth="2">
      {holes.map((x, i) =>
        i % 2 === 0 ? <ellipse key={i} cx={x} cy={holes[i + 1]} rx="4" ry="5" /> : null
      )}
    </g>
    <WireSet wires={flapWires} />
  </g>
);

const Hinges = () => (
  <g transform="translate(-660 90)" fill="none">
    {/* hinge blocks along the flap roots */}
    <path d="M540 100C625 165 672 270 686 370S700 560 645 655" stroke="#0a3c0a" strokeWidth="20" />
    <path
      d="M540 100C625 165 672 270 686 370S700 560 645 655"
      stroke="#00d800"
      strokeWidth="14"
      strokeDasharray="18 4 9 4"
    />
    <path d="M540 100C625 165 672 270 686 370S700 560 645 655" stroke="#0a3c0a" strokeWidth="2" />
    <WireSet wires={flapWires.slice(6, 22)} />
    {rimBolts.map((dot, i) => (
      <Bolt key={i} dot={dot} />
    ))}
  </g>
);

const Viewport = () => (
  <div className="min-h-0 flex-1 bg-linear-to-r from-[#e6e6e6] via-[#8c8c8c] to-[#303030]">
    <svg viewBox="300 72 768 392" className="size-full" role="img" aria-label="Jet engine model">
      <defs>
        <linearGradient id="casing" x1="0" y1="0" x2="0.15" y2="1">
          <stop offset="0" stopColor="#a83400" />
          <stop offset="0.28" stopColor="#f04800" />
          <stop offset="0.45" stopColor="#ff5000" />
          <stop offset="0.85" stopColor="#ff4c00" />
          <stop offset="1" stopColor="#d84000" />
        </linearGradient>
        <linearGradient id="green" x1="0" y1="0" x2="0" y2="1">
          <stop offset="0" stopColor="#0a9c0a" />
          <stop offset="0.15" stopColor="#00ea00" />
          <stop offset="0.4" stopColor="#00ff00" />
          <stop offset="0.85" stopColor="#00f400" />
          <stop offset="1" stopColor="#0aac0a" />
        </linearGradient>
        <linearGradient id="tube" x1="0" y1="0" x2="0.3" y2="1">
          <stop offset="0" stopColor="#808090" />
          <stop offset="0.45" stopColor="#c0bedc" />
          <stop offset="1" stopColor="#77778a" />
        </linearGradient>
      </defs>
      <g transform="translate(600 150) scale(.33333)">
        <Casing />
        <Combustion />
        <Nozzle />
        <GreenBody />
        <Hinges />
        <WireSet wires={bandWires} />
        {flangeBolts.map((dot, i) => (
          <Bolt key={i} dot={dot} />
        ))}
      </g>
      {/* axis triad */}
      <path d="M327 440l7-9" stroke="#f33" />
      <path d="M331 432l4-3 1 3-3 2z" fill="#f00" />
      <path d="M326 440l14-3" stroke="#22f" />
      <path d="M340 435l6 2-6 3z" fill="#00f" />
      <path d="M327 440l7 14" stroke="#2e2" />
      <path d="M332 454l5-2v7z" fill="#0f0" />
      <path d="M332 435l6 8-4 7-5-7z" fill="#f00" />
      <g fontFamily="'DejaVu Sans Mono', monospace" fontWeight="700" fontSize="8">
        <text x="336" y="428" fill="#f00">X</text>
        <text x="347" y="437" fill="#00f">Z</text>
        <text x="337" y="459" fill="#0f0">Y</text>
      </g>
    </svg>
  </div>
);

const rule = "-".repeat(75);

const App = () => {
  return (
    <div className="flex h-screen flex-col overflow-hidden bg-[#efefef] font-['Open_Sans',sans-serif] text-[11px] leading-[15px] text-[#222]">
      <div className="h-1 shrink-0 bg-white" />
      <div className="h-[33px] shrink-0 border-b border-[#d2d2d2]">
        <Toolbar label="File" tools={fileTools} />
      </div>
      <div className="h-[35px] shrink-0 border-b border-[#c8c8c8]">
        <Toolbar label="Model" tools={modelTools} />
      </div>
      <div className="flex min-h-0 flex-1 gap-1 pb-[9px]">
        <ProjectPanel />
        <main className="flex min-w-0 flex-1 flex-col gap-1">
          <Viewport />
          <div className="grid h-[121px] shrink-0 grid-cols-[453fr_311fr] gap-1">
            <section className="flex min-w-0 flex-col">
              <PanelTitle title="Console" />
              <pre className="flex-1 overflow-hidden border border-[#a8a8a8] bg-white px-0.5 py-px font-['Liberation_Mono',monospace] text-[9px] leading-[11px] text-[#222]">
                {`${rule}\n    LiToSim 2022\n    Chongqing LiToSim Software Co., January 01, 2022\n${rule}`}
              </pre>
            </section>
            <section className="flex min-w-0 flex-col">
              <PanelTitle title="Progress" />
              <div className="flex-1 border border-[#a8a8b0]" />
            </section>
          </div>
        </main>
        <aside className="flex w-2 shrink-0 flex-col overflow-hidden">
          <h2 className="h-4 shrink-0 border border-r-0 border-[#c4c4c4] bg-[#d9d9d9] pl-px leading-[13px]">P</h2>
          <div className="flex-1 bg-white" />
        </aside>
      </div>
    </div>
  );
};

export default App;
